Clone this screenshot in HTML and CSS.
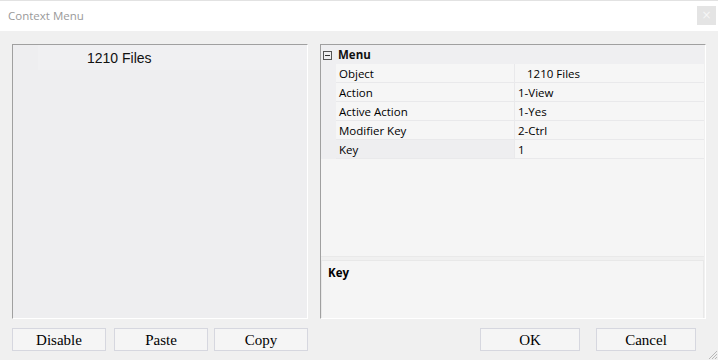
FILE: index.html
```html
<!DOCTYPE html>
<html>
<head>
<meta charset="utf-8">
<title>Context Menu</title>
<link rel="stylesheet" href="styles.css">
</head>
<body>
<div class="window">
  <div class="titlebar">
    <span class="title">Context Menu</span>
    <span class="close">×</span>
  </div>
  <div class="content">
    <div class="panels">
      <div class="panel left">
        <div class="item">1210 Files</div>
      </div>
      <div class="panel right">
        <div class="grid">
          <div class="cat">
            <span class="minus"></span>
            <span class="cat-name">Menu</span>
          </div>
          <div class="row"><span class="margin"></span><span class="label">Object</span><span class="value indent">1210 Files</span></div>
          <div class="row"><span class="margin"></span><span class="label">Action</span><span class="value">1-View</span></div>
          <div class="row"><span class="margin"></span><span class="label">Active Action</span><span class="value">1-Yes</span></div>
          <div class="row"><span class="margin"></span><span class="label">Modifier Key</span><span class="value">2-Ctrl</span></div>
          <div class="row selected"><span class="margin"></span><span class="label">Key</span><span class="value">1</span></div>
        </div>
        <div class="desc">
          <div class="desc-title">Key</div>
        </div>
      </div>
    </div>
    <div class="buttons">
      <div class="btn-group">
        <button class="btn">Disable</button>
        <button class="btn">Paste</button>
        <button class="btn copy">Copy</button>
      </div>
      <div class="btn-group right-group">
        <button class="btn wide">OK</button>
        <button class="btn wide">Cancel</button>
      </div>
    </div>
  </div>
  <svg class="grip" width="11" height="11" viewBox="0 0 11 11">
    <path d="M10 2 L2 10 M10 5 L5 10 M10 8 L8 10" stroke="#b8b8b8" stroke-width="1"/>
  </svg>
</div>
</body>
</html>
```

FILE: styles.css
```css
* { box-sizing: border-box; }
html, body {
  margin: 0;
  padding: 0;
  width: 718px;
  height: 360px;
  overflow: hidden;
  background: #f0f0f0;
}
.window {
  position: relative;
  width: 718px;
  height: 360px;
  font-family: "Open Sans", "Noto Sans", sans-serif;
  color: #000;
}
.titlebar {
  height: 31px;
  background: #ffffff;
  border-top: 1px solid #e2e2e2;
  display: flex;
  align-items: center;
  justify-content: space-between;
  padding-left: 8px;
  padding-right: 2px;
}
.title {
  font-size: 11.5px;
  color: #9a9a9a;
  margin-top: -1px;
}
.close {
  width: 19px;
  height: 19px;
  background: #e4e4e4;
  color: #f6f6f6;
  font-size: 12px;
  line-height: 18px;
  text-align: center;
  font-family: "DejaVu Sans", sans-serif;
  margin-top: -1px;
}
.content {
  padding: 13px 0 0 12px;
}
.panels {
  display: flex;
  gap: 12px;
  height: 275px;
}
.panel {
  border-top: 1px solid #a0a0a0;
  border-left: 1px solid #a0a0a0;
  border-right: 1px solid #ffffff;
  border-bottom: 1px solid #ffffff;
  height: 275px;
}
.left {
  width: 296px;
  background: #eeeef0;
  padding-left: 25px;
}
.item {
  height: 25px;
  background: #f0f0f2;
  font-family: "Liberation Sans", Arial, sans-serif;
  font-size: 14px;
  line-height: 26px;
  padding-left: 49px;
  color: #111;
}
.right {
  width: 386px;
  background: #f0f0f0;
  display: flex;
  flex-direction: column;
}
.grid {
  height: 212px;
  background: #f5f5f5;
  margin-right: 1px;
  border-bottom: 1px solid #e9e9e9;
}
.cat {
  height: 19px;
  background: #efeff1;
  display: flex;
  align-items: center;
}
.minus {
  position: relative;
  width: 9px;
  height: 9px;
  border: 1px solid #555;
  margin-left: 2px;
  margin-right: 6px;
  margin-top: 1px;
}
.minus::after {
  content: "";
  position: absolute;
  left: 1px;
  right: 1px;
  top: 3px;
  height: 1px;
  background: #333;
}
.cat-name {
  font-weight: bold;
  font-size: 11.5px;
  color: #111;
}
.row {
  display: flex;
  height: 19px;
  font-size: 11.5px;
  line-height: 19px;
}
.margin {
  width: 15px;
  background: #efeff1;
}
.label {
  width: 179px;
  background: #f6f6f6;
  border-bottom: 1px solid #e9e9eb;
  border-right: 1px solid #e9e9eb;
  padding-left: 3px;
}
.value {
  flex: 1;
  background: #f6f6f6;
  border-bottom: 1px solid #e9e9eb;
  padding-left: 3px;
}
.indent {
  padding-left: 12px;
}
.selected .label {
  background: #eeeef0;
}
.selected .margin {
  background: #eeeef0;
}
.desc {
  margin-top: 3px;
  height: 58px;
  background: #f5f5f5;
  border: 1px solid #e8e8e8;
  border-bottom: none;
  margin-right: 1px;
  padding: 4px 6px;
}
.desc-title {
  font-weight: bold;
  font-size: 11.5px;
}
.buttons {
  display: flex;
  justify-content: space-between;
  margin-top: 9px;
  padding-right: 22px;
}
.btn-group {
  display: flex;
  gap: 8px;
}
.right-group {
  gap: 16px;
}
.btn {
  width: 94px;
  height: 23px;
  background: #f5f5f5;
  border: 1px solid #d6d7df;
  font-family: "Liberation Serif", "Times New Roman", serif;
  font-size: 15px;
  color: #000;
  padding: 0;
  line-height: 20px;
}
.copy {
  margin-left: -2px;
}
.wide {
  width: 100px;
}
.grip {
  position: absolute;
  right: 0;
  bottom: 0;
}
```
